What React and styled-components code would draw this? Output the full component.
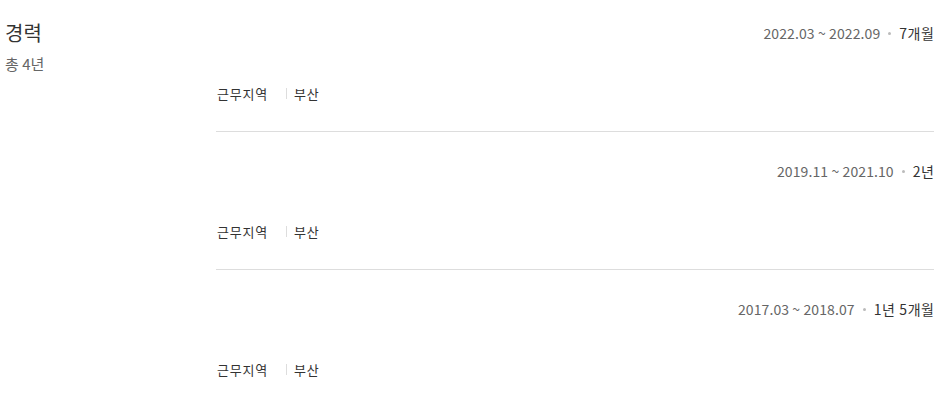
import React from "react";
import styled, { createGlobalStyle } from "styled-components";

const GlobalStyle = createGlobalStyle`
  body {
    margin: 0;
    background: #fff;
    font-family: "Noto Sans CJK KR", "Noto Sans", sans-serif;
    color: #333;
  }
`;

const careers = [
  { period: "2022.03 ~ 2022.09", length: "7개월", region: "부산" },
  { period: "2019.11 ~ 2021.10", length: "2년", region: "부산" },
  { period: "2017.03 ~ 2018.07", length: "1년 5개월", region: "부산" },
];

const Section = styled.section`
  display: flex;
  width: 934px;
`;

const Aside = styled.div`
  width: 211px;
  flex-shrink: 0;
  padding: 19px 0 0 5px;
`;

const Title = styled.h2`
  margin: 0;
  font-size: 20px;
  line-height: 28px;
  font-weight: 400;
  color: #333;
`;

const Total = styled.p`
  margin: 8px 0 0;
  font-size: 15px;
  line-height: 18px;
  color: #666;
`;

const List = styled.ul`
  flex: 1;
  margin: 0;
  padding: 0;
  list-style: none;
`;

const Item = styled.li`
  padding: 29px 0 29px;
  border-bottom: 1px solid #ddd;

  &:first-child {
    padding-top: 23px;
  }

  &:last-child {
    border-bottom: none;
  }
`;

const Period = styled.div`
  display: flex;
  justify-content: flex-end;
  align-items: center;
  height: 20px;
  font-size: 14px;
  letter-spacing: 0.1px;
  color: #666;
  margin-bottom: 41px;
`;

const Dot = styled.span`
  width: 3px;
  height: 3px;
  border-radius: 50%;
  background: #bbb;
  margin: 0 8px;
`;

const Length = styled.span`
  color: #333;
  letter-spacing: 0.6px;
  margin-right: -0.6px;
`;

const InfoRow = styled.div`
  display: flex;
  align-items: center;
  height: 18px;
  font-size: 13px;
  letter-spacing: 0.8px;
  color: #333;
`;

const Label = styled.span`
  padding-left: 1px;
`;

const Sep = styled.span`
  width: 1px;
  height: 11px;
  background: #ddd;
  margin: 0 7px 0 18px;
`;

export default function App() {
  return (
    <>
      <GlobalStyle />
      <Section>
        <Aside>
          <Title>경력</Title>
          <Total>총 4년</Total>
        </Aside>
        <List>
          {careers.map((c) => (
            <Item key={c.period}>
              <Period>
                {c.period}
                <Dot />
                <Length>{c.length}</Length>
              </Period>
              <InfoRow>
                <Label>근무지역</Label>
                <Sep />
                {c.region}
              </InfoRow>
            </Item>
          ))}
        </List>
      </Section>
    </>
  );
}
